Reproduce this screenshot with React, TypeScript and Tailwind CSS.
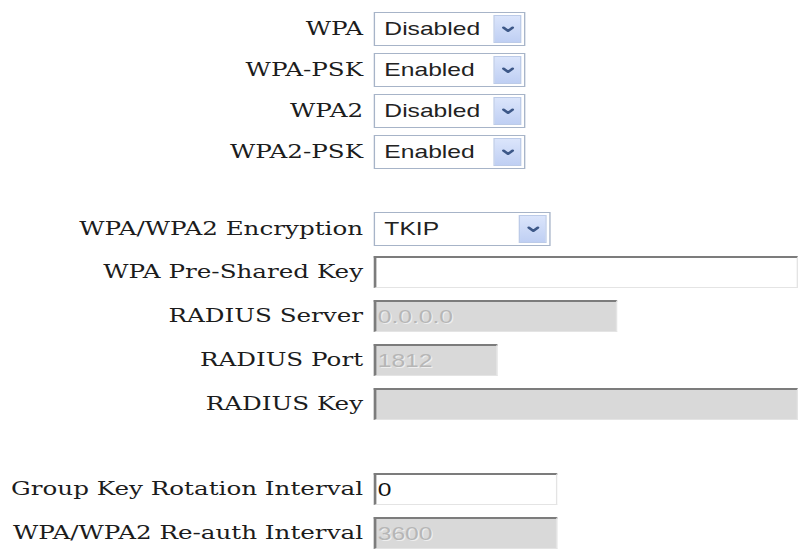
import React from 'react'

const serif = "[font-family:'DejaVu_Serif','Liberation_Serif',serif]"
const sans = "[font-family:'Liberation_Sans',Arial,sans-serif]"

function Label({ children }: { children: React.ReactNode }) {
  return (
    <div className={`flex w-[273px] shrink-0 justify-end whitespace-nowrap text-[18.5px] leading-none text-[#1c1c1c] ${serif}`}>
      {children}
    </div>
  )
}

function Select({ value, width }: { value: string; width: string }) {
  return (
    <div className={`flex h-[34px] items-center justify-between border border-[#a7b4c8] bg-white pl-[7px] pr-[2px] ${width}`}>
      <span className={`text-[18.5px] leading-none text-[#222] ${sans}`}>{value}</span>
      <span className="flex h-[28px] w-[21px] items-center justify-center border border-[#bccbe8] bg-gradient-to-b from-[#dbe5fb] to-[#bfcff3]">
        <svg width="10" height="7" viewBox="0 0 10 7">
          <polyline
            points="1.6,1.6 5,4.9 8.4,1.6"
            fill="none"
            stroke="#3d5888"
            strokeWidth="2.2"
            strokeLinecap="round"
            strokeLinejoin="round"
          />
        </svg>
      </span>
    </div>
  )
}

function Field({ value = '', width, disabled = false }: { value?: string; width: string; disabled?: boolean }) {
  return (
    <input
      readOnly
      disabled={disabled}
      value={value}
      className={`h-[32px] border-t-2 border-l-2 border-r border-b border-t-[#7c7c7c] border-l-[#7c7c7c] border-r-[#e4e4e4] border-b-[#e4e4e4] pl-[1px] text-[18.5px] leading-none outline-none ${sans} ${
        disabled ? 'bg-[#d9d9d9] text-[#b6b6b6] [text-shadow:1px_1px_0_#eeeeee]' : 'bg-white text-[#111]'
      } ${width}`}
    />
  )
}

function Row({ label, children }: { label: string; children: React.ReactNode }) {
  return (
    <div className="flex items-center gap-[8px]">
      <Label>{label}</Label>
      {children}
    </div>
  )
}

export default function App() {
  return (
    <div className="min-h-[554px] w-[806px] overflow-hidden bg-white">
      <div className="w-[606px] origin-top-left scale-x-[1.33] pt-[12px]">
        <div className="flex flex-col gap-[7px]">
          <Row label="WPA">
            <Select value="Disabled" width="w-[114px]" />
          </Row>
          <Row label="WPA-PSK">
            <Select value="Enabled" width="w-[114px]" />
          </Row>
          <Row label="WPA2">
            <Select value="Disabled" width="w-[114px]" />
          </Row>
          <Row label="WPA2-PSK">
            <Select value="Enabled" width="w-[114px]" />
          </Row>
        </div>

        <div className="mt-[43px] flex flex-col gap-[10px]">
          <Row label="WPA/WPA2 Encryption">
            <Select value="TKIP" width="w-[133px]" />
          </Row>
          <div className="flex flex-col gap-[12px]">
            <Row label="WPA Pre-Shared Key">
              <Field width="w-[319px]" />
            </Row>
            <Row label="RADIUS Server">
              <Field value="0.0.0.0" width="w-[183px]" disabled />
            </Row>
            <Row label="RADIUS Port">
              <Field value="1812" width="w-[93px]" disabled />
            </Row>
            <Row label="RADIUS Key">
              <Field width="w-[319px]" disabled />
            </Row>
          </div>
        </div>

        <div className="mt-[53px] flex flex-col gap-[12px]">
          <Row label="Group Key Rotation Interval">
            <Field value="0" width="w-[138px]" />
          </Row>
          <Row label="WPA/WPA2 Re-auth Interval">
            <Field value="3600" width="w-[138px]" disabled />
          </Row>
        </div>
      </div>
    </div>
  )
}
